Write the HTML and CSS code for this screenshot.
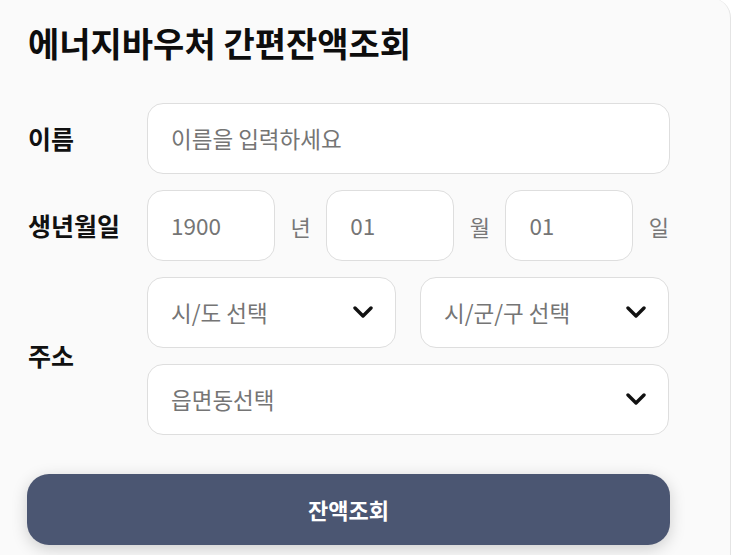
FILE: index.html
```html
<!DOCTYPE html>
<html>
<head>
<meta charset="utf-8">
<title>에너지바우처 간편잔액조회</title>
<link rel="stylesheet" href="styles.css">
</head>
<body>
<div class="card">
  <h1 class="title">에너지바우처 간편잔액조회</h1>

  <div class="form">
    <div class="label">이름</div>
    <div class="field">
      <input class="box wide" type="text" placeholder="이름을 입력하세요">
    </div>

    <div class="label">생년월일</div>
    <div class="field birth">
      <input class="box small" type="text" placeholder="1900">
      <span class="unit">년</span>
      <input class="box small" type="text" placeholder="01">
      <span class="unit">월</span>
      <input class="box small" type="text" placeholder="01">
      <span class="unit">일</span>
    </div>

    <div class="label addr-label">주소</div>
    <div class="field addr">
      <div class="box select">
        <span>시/도 선택</span>
        <svg class="chev" viewBox="0 0 20 12"><path d="M2 2 L10 10 L18 2"/></svg>
      </div>
      <div class="box select">
        <span>시/군/구 선택</span>
        <svg class="chev" viewBox="0 0 20 12"><path d="M2 2 L10 10 L18 2"/></svg>
      </div>
      <div class="box select full">
        <span>읍면동선택</span>
        <svg class="chev" viewBox="0 0 20 12"><path d="M2 2 L10 10 L18 2"/></svg>
      </div>
    </div>
  </div>

  <button class="submit">잔액조회</button>
</div>
</body>
</html>
```

FILE: styles.css
```css
* {
    box-sizing: border-box;
}

body {
    margin: 0;
    background: #ffffff;
    font-family: "Noto Sans CJK KR", "Noto Sans", sans-serif;
    color: #111;
}

.card {
    width: 731px;
    height: 557px;
    margin-top: -2px;
    padding: 23px 0 0 28px;
    background: #fafafa;
    border-right: 1px solid #e4e4e4;
    border-top-right-radius: 20px;
    overflow: hidden;
}

.title {
    margin: 0 0 38px 0;
    font-size: 34px;
    font-weight: 700;
    line-height: 44px;
    color: #0d0d0d;
}

.form {
    display: grid;
    grid-template-columns: 119px 523px;
    grid-template-rows: 71px 71px 158px;
    row-gap: 16px;
}

.label {
    display: flex;
    align-items: center;
    padding-bottom: 2px;
    font-size: 25px;
    font-weight: 700;
}

.field {
    display: flex;
    align-items: center;
}

.box {
    height: 71px;
    background: #fff;
    border: 1px solid #dedede;
    border-radius: 16px;
    padding: 0 22px 2px 23px;
    font-family: inherit;
    font-size: 22.5px;
    color: #757575;
    outline: none;
}

.box::placeholder {
    color: #757575;
}

.wide {
    width: 100%;
}

.birth {
    justify-content: space-between;
}

.small {
    width: 128px;
}

.unit {
    font-size: 22px;
    color: #777;
    width: 22px;
    text-align: center;
}

.addr {
    display: grid;
    grid-template-columns: 249px 249px;
    column-gap: 24px;
    row-gap: 16px;
}

.select {
    display: flex;
    align-items: center;
    justify-content: space-between;
}

.full {
    grid-column: 1 / 3;
}

.chev {
    width: 20px;
    height: 12px;
    fill: none;
    stroke: #111;
    stroke-width: 3.4;
    stroke-linecap: round;
    stroke-linejoin: round;
}

.submit {
    display: block;
    width: 643px;
    height: 71px;
    margin: 39px 0 0 -1px;
    padding-bottom: 2px;
    border: none;
    border-radius: 22px;
    background: #4b5672;
    color: #fff;
    font-family: inherit;
    font-size: 22px;
    font-weight: 700;
    box-shadow: 0 4px 16px rgba(0, 0, 0, 0.18);
}
```
